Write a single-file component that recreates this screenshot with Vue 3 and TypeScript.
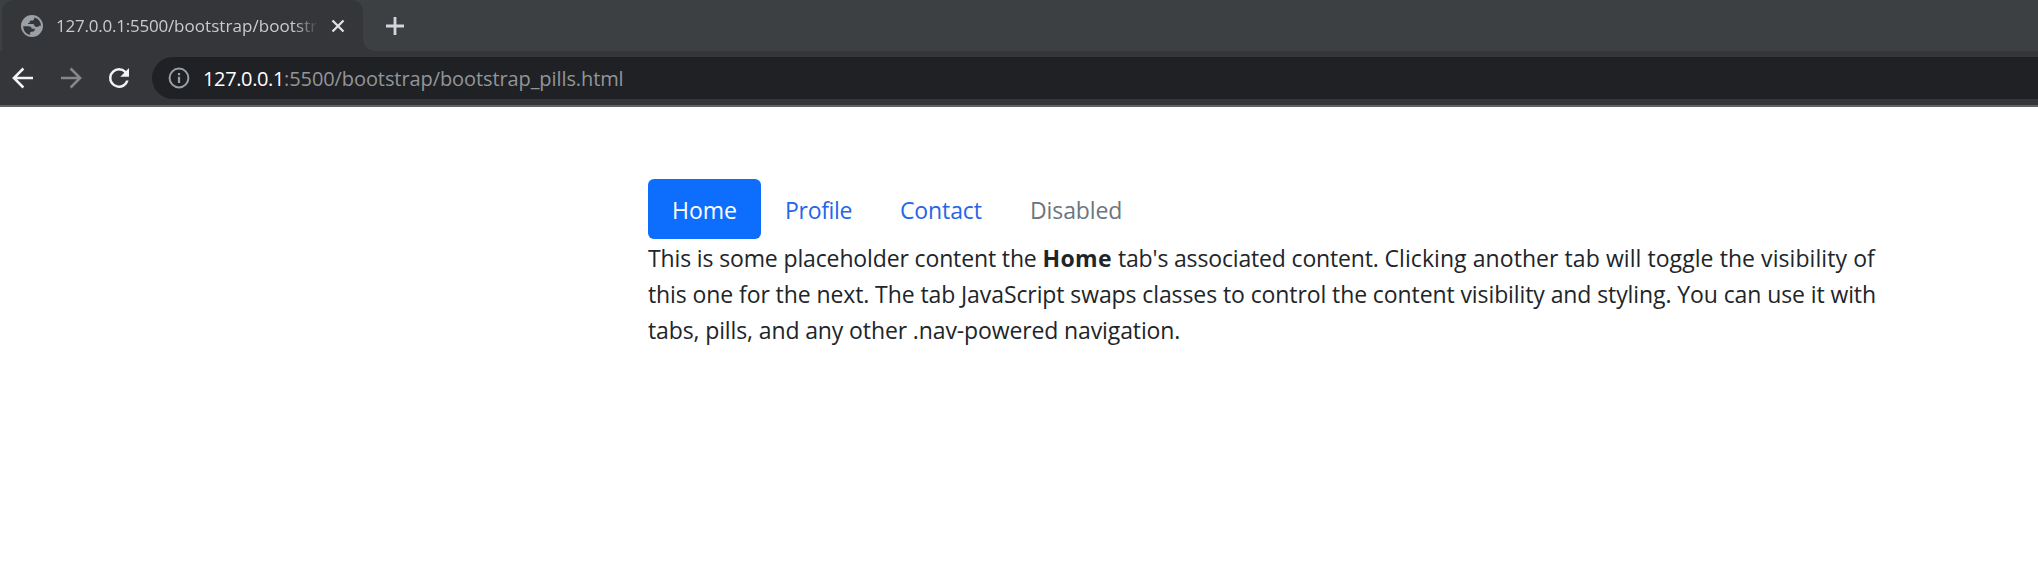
<script setup lang="ts">
interface Pill {
  label: string
  kind: string
}

const pills: Pill[] = [
  { label: 'Home', kind: 'home active' },
  { label: 'Profile', kind: 'profile' },
  { label: 'Contact', kind: 'contact' },
  { label: 'Disabled', kind: 'disabled' },
]
</script>

<template>
  <div class="window">
    <header class="strip">
      <div class="tab">
        <svg class="globe" viewBox="0 0 24 24">
          <circle cx="12" cy="12" r="12" fill="#9aa0a6" />
          <path
            fill="#35363a"
            d="M2.3 12.2 8.7 12.2Q11.6 12.4 11.8 15L15 15Q15.3 18.2 12 18.3L10.2 18.5 10 21.6Q3 20.4 2.3 12.2ZM14.6 2.6 14.3 4.6Q14 6 12.4 6L9.7 6.2 9.6 8.3Q7.6 8.4 7.5 9.8L13.4 9.9Q14.4 10.2 14.6 11.8L16.4 13Q19.7 13.1 20.5 11.5L21.8 11.9Q21.8 4.9 14.6 2.6Z"
          />
        </svg>
        <span class="title"><span class="title-host">127.0.0.1:5500/</span>bootstrap/bootstr</span>
        <svg class="close" viewBox="0 0 14 14">
          <path d="M1.5 1.5 12.5 12.5M12.5 1.5 1.5 12.5" stroke="#dfe1e5" stroke-width="2.3" />
        </svg>
      </div>
      <svg class="plus" viewBox="0 0 18 18">
        <path d="M9 0V18M0 9H18" stroke="#d3d6da" stroke-width="2.8" />
      </svg>
    </header>
    <div class="toolbar">
      <svg class="nav-icon" viewBox="0 0 24 24">
        <path d="M20 12H4.8M12.3 4.4 4.7 12l7.6 7.6" fill="none" stroke="#f1f3f4" stroke-width="2" />
      </svg>
      <svg class="nav-icon" viewBox="0 0 24 24">
        <path d="M4 12h15.2M11.7 4.4 19.3 12l-7.6 7.6" fill="none" stroke="#85878b" stroke-width="2" />
      </svg>
      <svg class="nav-icon" viewBox="0 0 24 24">
        <path
          fill="#f1f3f4"
          d="M17.65 6.35A7.96 7.96 0 0 0 12 4a8 8 0 1 0 7.73 10h-2.08A6 6 0 1 1 12 6c1.66 0 3.14.69 4.22 1.78L13 11h7V4z"
        />
      </svg>
      <div class="omnibox">
        <svg class="info" viewBox="0 0 22 22">
          <circle cx="11" cy="11" r="9.4" fill="none" stroke="#9aa0a6" stroke-width="2" />
          <path d="M11 9.8V16M11 6V8.2" stroke="#9aa0a6" stroke-width="2.2" />
        </svg>
        <span class="host">127.0.0.1</span><span class="path">:5500/bootstrap/bootstrap_pills.html</span>
      </div>
    </div>
    <main class="page">
      <nav class="pills">
        <a v-for="pill in pills" :key="pill.label" class="pill" :class="pill.kind">{{ pill.label }}</a>
      </nav>
      <div class="content">
        <div class="line"><span class="lead">This is some placeholder content the </span><strong>Home</strong><span class="middle"> tab's associated content. </span><span class="tail">Clicking another tab will toggle the visibility of</span></div>
        <div class="line second">this one for the next. The tab JavaScript swaps classes to control the content visibility and styling. You can use it with</div>
        <div class="line third">tabs, pills, and any other .nav-powered navigation.</div>
      </div>
    </main>
  </div>
</template>

<style>
body {
  background: #fff;
}
</style>

<style scoped>
.window {
  height: 561px;
  overflow: hidden;
  background: #fff;
  font-family: "Open Sans", "Noto Sans", sans-serif;
  white-space: nowrap;
}
.window svg {
  display: block;
  flex: none;
}
.strip {
  display: flex;
  align-items: center;
  height: 51px;
  background: #3c4043;
}
.tab {
  position: relative;
  display: flex;
  align-items: center;
  box-sizing: border-box;
  width: 361px;
  height: 51px;
  margin-left: 2px;
  padding-left: 19px;
  border-radius: 12px 12px 0 0;
  background: #35363a;
}
.tab::after {
  content: "";
  position: absolute;
  left: 100%;
  bottom: 0;
  width: 12px;
  height: 12px;
  background: radial-gradient(circle at 100% 0, transparent 11.5px, #35363a 12px);
}
.globe {
  width: 22px;
  height: 22px;
}
.title {
  width: 264px;
  margin-left: 13px;
  color: #c9cbcf;
  font-size: 17px;
  line-height: 26px;
  letter-spacing: 0.07px;
  mask-image: linear-gradient(to right, #000 238px, transparent 263px);
}
.title-host {
  letter-spacing: -0.22px;
}
.close {
  width: 14px;
  height: 14px;
  margin-left: 11px;
}
.plus {
  width: 18px;
  height: 18px;
  margin-left: 23px;
}
.toolbar {
  display: flex;
  align-items: center;
  gap: 18px;
  box-sizing: border-box;
  height: 56px;
  padding-left: 8px;
  border-bottom: 2px solid #626165;
  background: #35363a;
}
.nav-icon {
  width: 30px;
  height: 30px;
}
.omnibox {
  display: flex;
  flex: 1;
  align-items: center;
  height: 42px;
  padding-left: 16px;
  border-radius: 21px 0 0 21px;
  background: #202124;
  font-size: 20px;
  line-height: 40px;
}
.info {
  width: 22px;
  height: 22px;
  margin-right: 13px;
}
.host,
.path {
  padding-top: 2px;
}
.host {
  color: #fff;
  letter-spacing: -0.37px;
}
.path {
  color: #929599;
  letter-spacing: -0.09px;
}
.page {
  width: 1240px;
  margin-left: 648px;
  padding-top: 72px;
  color: #212529;
  font-size: 23px;
  line-height: 36px;
}
.pills {
  display: flex;
}
.pill {
  box-sizing: border-box;
  height: 60px;
  padding: 13px 24px 11px;
  border-radius: 6px;
  color: #2566e8;
}
.active {
  width: 113px;
  background: #0d6efd;
  color: #fff;
}
.profile {
  width: 115px;
  letter-spacing: -0.3px;
}
.contact {
  width: 130px;
  letter-spacing: -0.12px;
}
.disabled {
  color: #6c757d;
  letter-spacing: -0.1px;
}
.content {
  padding-top: 1px;
}
.lead {
  letter-spacing: -0.135px;
}
.line strong {
  font-weight: 700;
  letter-spacing: 0.4px;
}
.middle {
  letter-spacing: -0.16px;
}
.tail {
  letter-spacing: 0.07px;
}
.second {
  letter-spacing: -0.095px;
}
.third {
  letter-spacing: -0.12px;
}
</style>
